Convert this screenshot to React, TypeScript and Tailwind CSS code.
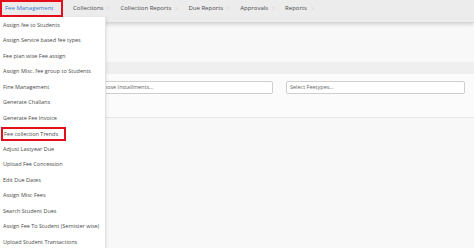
import { ChevronRight } from 'lucide-react';

const navItems = ['Collections', 'Collection Reports', 'Due Reports', 'Approvals', 'Reports'];

const menuItems = [
  'Assign fee to Students',
  'Assign Service based fee types',
  'Fee plan wise Fee assign',
  'Assign Misc. fee group to Students',
  'Fine Management',
  'Generate Challans',
  'Generate Fee Invoice',
  'Fee collection Trends',
  'Adjust Lastyear Due',
  'Upload Fee Concession',
  'Edit Due Dates',
  'Assign Misc Fees',
  'Search Student Dues',
  'Assign Fee To Student (Semister wise)',
  'Upload Student Transactions',
];

export default function App() {
  return (
    <div
      className="relative w-[474px] h-[248px] overflow-hidden bg-[#f8f8f8] text-[#4a4a4a]"
      style={{ fontFamily: '"Open Sans", "Liberation Sans", sans-serif' }}
    >
      {/* Top navigation */}
      <div className="h-[23px] bg-[#ececec] border-b border-[#d6d6d6] shadow-[0_2px_3px_rgba(0,0,0,0.12)] flex items-start">
        <div className="h-[17px] w-[63px] border-2 border-[#e3101c] flex items-center pl-[3px] text-[6px] text-[#3b7ad0]">
          Fee Management
        </div>
        <div className="flex items-center h-[17px] pl-[10px] gap-[9px] text-[6px]">
          {navItems.map((item) => (
            <div key={item} className="flex items-center gap-[3px]">
              <span>{item}</span>
              <ChevronRight className="w-[5px] h-[5px] text-[#bbb]" strokeWidth={2} />
            </div>
          ))}
        </div>
      </div>

      {/* Page content */}
      <div className="h-[39px]" />
      <div className="h-[12px] bg-[#efefef]" />
      <div className="h-[44px] bg-[#fbfbfb] border-b border-[#e6e6e6] flex items-start pt-[7px] pl-[93px] gap-[13px]">
        <div className="w-[180px] h-[13px] bg-white border border-[#cfcfcf] rounded-[2px] flex items-center pl-[3px] text-[5.5px] text-[#666]">
          Choose Installments...
        </div>
        <div className="w-[179px] h-[13px] bg-white border border-[#cfcfcf] rounded-[2px] flex items-center pl-[3px] text-[5.5px] text-[#666]">
          Select Feetypes...
        </div>
      </div>

      {/* Dropdown menu */}
      <div className="absolute left-0 top-[17px] w-[106px] h-[240px] bg-white border-r border-[#e2e2e2] shadow-[1px_1px_3px_rgba(0,0,0,0.08)]">
        {menuItems.map((item) => (
          <div key={item} className="h-[15.5px] flex items-center pl-[3px]">
            {item === 'Fee collection Trends' ? (
              <span className="h-[14px] w-[65px] -ml-[2px] mt-[1px] border-2 border-[#e3101c] flex items-center pl-[1px] text-[5.5px] text-[#4a4a4a]">
                {item}
              </span>
            ) : (
              <span className="text-[5.5px] text-[#4a4a4a]">{item}</span>
            )}
          </div>
        ))}
      </div>
    </div>
  );
}
